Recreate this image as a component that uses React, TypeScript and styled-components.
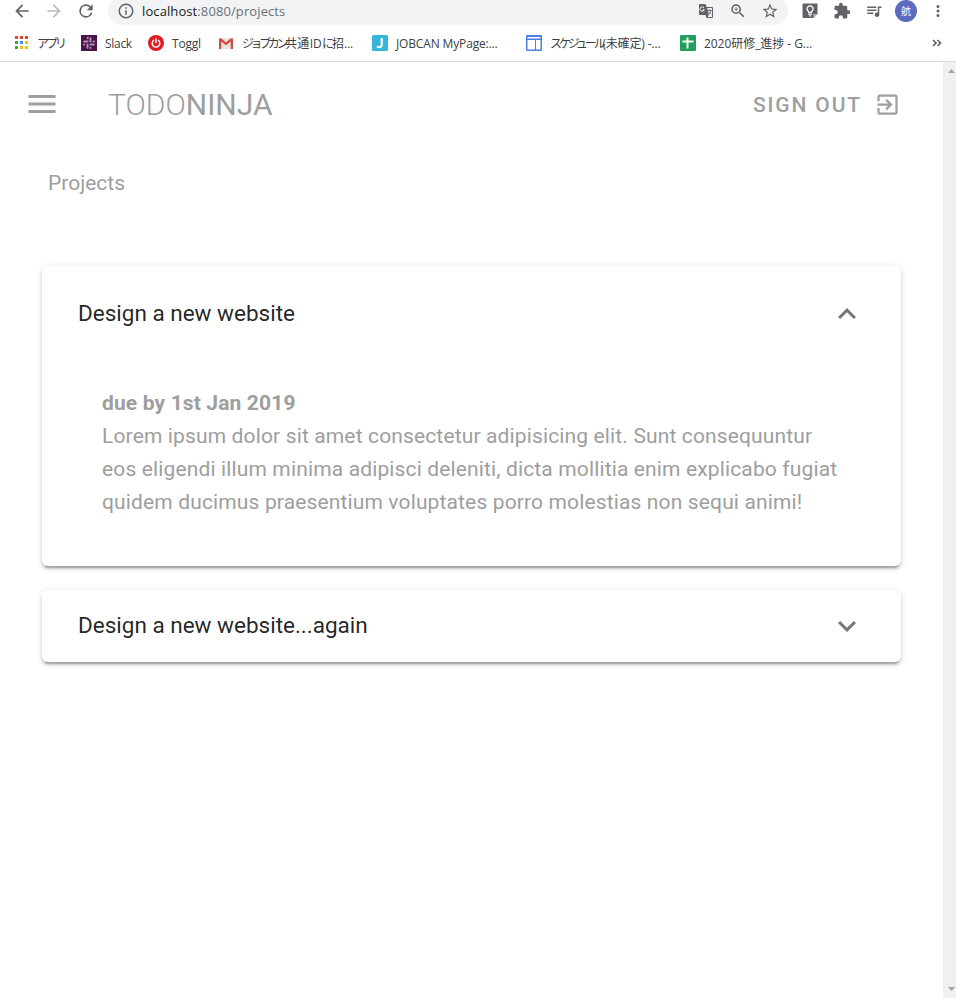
import React, { useState } from "react";
import styled, { createGlobalStyle, css } from "styled-components";

const GlobalStyle = createGlobalStyle`
  *, *::before, *::after { box-sizing: border-box; }
  html, body, #root { height: 100%; margin: 0; overflow: hidden; background: #fff; }
  button { border: 0; padding: 0; background: none; font: inherit; color: inherit; cursor: pointer; }
`;

const Window = styled.div`
  display: flex;
  flex-direction: column;
  width: 956px;
  height: 998px;
  overflow: hidden;
  background: #fff;
`;

const Icon = styled.svg<{ $size: number }>`
  display: block;
  flex: none;
  width: ${(p) => p.$size}px;
  height: ${(p) => p.$size}px;
  fill: currentColor;
`;

/* Browser chrome */

const AddressRow = styled.div`
  display: flex;
  align-items: center;
  flex: none;
  height: 25px;
  padding: 0 8px 3px 12px;
  color: #5f6368;
`;

const NavButton = styled.button<{ $dim?: boolean }>`
  margin-right: 12px;
  color: ${(p) => (p.$dim ? "#babcbe" : "#5f6368")};
`;

const Omnibox = styled.div`
  display: flex;
  align-items: center;
  width: 680px;
  height: 28px;
  margin: -3px 13px -3px 0;
  padding: 0 9px;
  border-radius: 14px;
  background: #f1f3f4;
`;

const Address = styled.div`
  flex: 1;
  margin-left: 7px;
  font: 13px/18px "Open Sans", "Noto Sans", sans-serif;
  letter-spacing: 0.1px;
  white-space: nowrap;
  color: #6c7074;
`;

const Host = styled.span`
  color: #202124;
`;

const OmniboxActions = styled.div`
  display: flex;
  gap: 14px;
`;

const Extensions = styled.div`
  display: flex;
  align-items: center;
  gap: 14px;
`;

const Avatar = styled.div`
  display: flex;
  align-items: center;
  justify-content: center;
  width: 22px;
  height: 22px;
  margin: 0 -2px;
  border-radius: 50%;
  background: #5c6bc0;
  color: #fff;
  font: 10px/22px "Noto Sans CJK JP", sans-serif;
`;

const BookmarkBar = styled.div`
  display: flex;
  align-items: center;
  flex: none;
  height: 37px;
  padding: 0 11px 0 13px;
  border-bottom: 1px solid #dadce0;
  color: #3c4043;
`;

const Bookmark = styled.div<{ $width: number }>`
  display: flex;
  align-items: center;
  gap: 8px;
  flex: none;
  width: ${(p) => p.$width}px;
`;

const BookmarkLabel = styled.span`
  padding-top: 2px;
  font: 12px/18px "Open Sans", "Noto Sans CJK JP", sans-serif;
  white-space: pre;
`;

const Run = styled.span<{ $spacing: number }>`
  letter-spacing: ${(p) => p.$spacing}px;
`;

const Overflow = styled.div`
  margin-left: auto;
  color: #5f6368;
`;

/* Page */

const Viewport = styled.div`
  display: flex;
  flex: 1;
  min-height: 0;
`;

const Page = styled.main`
  flex: 1;
  font-family: Roboto, sans-serif;
  color: #9e9e9e;
`;

const Toolbar = styled.header`
  display: flex;
  align-items: center;
  height: 84px;
  padding: 0 42px 0 24px;
`;

const Brand = styled.div`
  flex: 1;
  margin-left: 48px;
  font-size: 30px;
  line-height: 45px;
`;

const Thin = styled.span`
  font-weight: 300;
`;

const SignOut = styled.button`
  display: flex;
  align-items: center;
  gap: 12px;
  font-size: 21px;
  font-weight: 500;
  letter-spacing: 1.875px;
`;

const SignOutLabel = styled.span`
  padding-top: 2px;
`;

const Heading = styled.h1`
  margin: 0;
  padding: 0 48px;
  height: 72px;
  font-size: 21px;
  font-weight: 400;
  line-height: 74px;
`;

const Panels = styled.div`
  display: flex;
  flex-direction: column;
  gap: 24px;
  padding: 48px 42px;
`;

const Panel = styled.section`
  border-radius: 6px;
  background: #fff;
  box-shadow: 0 4.5px 1.5px -3px rgba(0, 0, 0, 0.2), 0 3px 3px 0 rgba(0, 0, 0, 0.14),
    0 1.5px 7.5px 0 rgba(0, 0, 0, 0.12);
`;

const PanelHeader = styled.button<{ $open: boolean }>`
  display: flex;
  align-items: center;
  justify-content: space-between;
  width: 100%;
  height: ${(p) => (p.$open ? 96 : 72)}px;
  padding: 0 36px;
  font-size: 22.5px;
  line-height: 22.5px;
  color: rgba(0, 0, 0, 0.87);
`;

const PanelTitle = styled.span`
  padding-bottom: 2px;
`;

const Chevron = styled(Icon)<{ $open: boolean }>`
  color: rgba(0, 0, 0, 0.54);
  ${(p) =>
    p.$open &&
    css`
      transform: rotate(180deg);
    `}
`;

const PanelBody = styled.div`
  padding: 25px 60px 47px;
  font-size: 21px;
  line-height: 33px;
  letter-spacing: 0.14px;
`;

const Due = styled.div`
  font-weight: 700;
`;

const Scrollbar = styled.div`
  display: flex;
  flex-direction: column;
  justify-content: space-between;
  align-items: flex-end;
  width: 13px;
  padding: 7px 1px 7px 0;
  background: #f0f0f0;
`;

const ScrollArrow = styled.svg`
  display: block;
  width: 7px;
  height: 4px;
  fill: #a3a3a3;
`;

const paths = {
  back: "M20 11H7.83l5.59-5.59L12 4l-8 8 8 8 1.41-1.41L7.83 13H20v-2z",
  forward: "M12 4l-1.41 1.41L16.17 11H4v2h12.17l-5.58 5.59L12 20l8-8z",
  reload:
    "M17.65 6.35A7.96 7.96 0 0 0 12 4a8 8 0 1 0 7.73 10h-2.08A6 6 0 1 1 12 6c1.66 0 3.14.69 4.22 1.78L13 11h7V4l-2.35 2.35z",
  info: "M11 7h2v2h-2zm0 4h2v6h-2zm1-9a10 10 0 1 0 0 20 10 10 0 0 0 0-20zm0 18a8 8 0 1 1 0-16 8 8 0 0 1 0 16z",
  zoom: "M15.5 14h-.79l-.28-.27A6.471 6.471 0 0 0 16 9.5 6.5 6.5 0 1 0 9.5 16c1.61 0 3.09-.59 4.23-1.57l.27.28v.79l5 4.99L20.49 19l-4.99-5zm-6 0C7.01 14 5 11.99 5 9.5S7.01 5 9.5 5 14 7.01 14 9.5 11.99 14 9.5 14zM12 10h-2v2H9v-2H7V9h2V7h1v2h2v1z",
  star: "M22 9.24l-7.19-.62L12 2 9.19 8.63 2 9.24l5.46 4.73L5.82 21 12 17.27 18.18 21l-1.63-7.03L22 9.24zM12 15.4l-3.76 2.27 1-4.28-3.32-2.88 4.38-.38L12 6.1l1.71 4.04 4.38.38-3.32 2.88 1 4.28L12 15.4z",
  puzzle:
    "M20.5 11H19V7c0-1.1-.9-2-2-2h-4V3.5a2.5 2.5 0 0 0-5 0V5H4c-1.1 0-1.99.9-1.99 2v3.8H3.5c1.49 0 2.7 1.21 2.7 2.7s-1.21 2.7-2.7 2.7H2V20c0 1.1.9 2 2 2h3.8v-1.5c0-1.49 1.21-2.7 2.7-2.7s2.7 1.21 2.7 2.7V22H17c1.1 0 2-.9 2-2v-4h1.5a2.5 2.5 0 0 0 0-5z",
  queue:
    "M15 6H3v2h12V6zm0 4H3v2h12v-2zM3 16h8v-2H3v2zM17 6v8.18c-.31-.11-.65-.18-1-.18-1.66 0-3 1.34-3 3s1.34 3 3 3 3-1.34 3-3V8h3V6h-5z",
  more: "M12 8a2 2 0 1 0 0-4 2 2 0 0 0 0 4zm0 2a2 2 0 1 0 0 4 2 2 0 0 0 0-4zm0 6a2 2 0 1 0 0 4 2 2 0 0 0 0-4z",
  menu: "M3 18h18v-2H3v2zm0-5h18v-2H3v2zm0-7v2h18V6H3z",
  exit: "M10.09 15.59L11.5 17l5-5-5-5-1.41 1.41L12.67 11H3v2h9.67l-2.58 2.59zM19 3H5a2 2 0 0 0-2 2v4h2V5h14v14H5v-4H3v4a2 2 0 0 0 2 2h14c1.1 0 2-.9 2-2V5c0-1.1-.9-2-2-2z",
  chevron: "M7.41 8.59L12 13.17l4.59-4.58L18 10l-6 6-6-6 1.41-1.41z",
};

const Glyph = ({ name, size = 18 }: { name: keyof typeof paths; size?: number }) => (
  <Icon $size={size} viewBox="0 0 24 24">
    <path d={paths[name]} />
  </Icon>
);

const TranslateIcon = () => (
  <Icon $size={18} viewBox="0 0 18 18">
    <path d="M3 2h5.500l1.200 3H15a1 1 0 0 1 1 1v9a1 1 0 0 1-1 1H9.500l-1.100-3H3a1 1 0 0 1-1-1V3a1 1 0 0 1 1-1z" />
    <path d="M10.200 6H15v9h-4.300l1-1.800z" fill="#f1f3f4" />
    <path d="M10.200 8.300h4.600M12.300 7.300v1M14 8.500c-.4 1.600-1.200 2.800-2.500 3.700M11.200 9.500l3 3" fill="none" stroke="#5f6368" strokeWidth="0.900" />
    <path d="M7 5.800A2.200 2.200 0 1 0 7.300 7.800H5.300" fill="none" stroke="#f1f3f4" />
  </Icon>
);

const BulbIcon = () => (
  <Icon $size={18} viewBox="0 0 18 18">
    <path d="M2.500 1.500h14v10.500l-4 4h-10a1 1 0 0 1-1-1v-12.500a1 1 0 0 1 1-1z" />
    <path d="M16.500 12l-4 4v-4z" fill="#b6b8ba" />
    <path d="M7.700 10.700V9.500a3 3 0 1 1 2.800 0v1.200z" fill="none" stroke="#fff" strokeWidth="1.300" />
    <path d="M7.200 12.300h3.800M8 13.900h2.200" stroke="#fff" strokeWidth="1" />
  </Icon>
);

const appColors = ["#ea4335", "#ea4335", "#ea4335", "#34a853", "#4285f4", "#fbbc05", "#34a853", "#fbbc05", "#fbbc05"];

const AppsIcon = () => (
  <Icon $size={16} viewBox="0 0 16 16">
    {appColors.map((fill, i) => (
      <rect key={i} x={2 + (i % 3) * 5} y={1 + Math.floor(i / 3) * 5} width="3" height="3" fill={fill} />
    ))}
  </Icon>
);

const SlackIcon = () => (
  <Icon $size={16} viewBox="0 0 16 16">
    <rect width="16" height="16" fill="#4a154b" />
    <path
      d="M6.700 2.800v.4M3.200 6.500h3.500M9.500 3.200v3.300M12.700 6.500h.3M12.800 9.500H9.500M9.500 12.800v.3M6.500 12.800V9.500M3.200 9.500H3"
      fill="none"
      stroke="#b08fb1"
      strokeWidth="2"
      strokeLinecap="round"
    />
  </Icon>
);

const TogglIcon = () => (
  <Icon $size={16} viewBox="0 0 16 16">
    <circle cx="8" cy="8" r="8" fill="#e01b22" />
    <path d="M6 5.100a3.800 3.800 0 1 0 4 0M8 3.300v5" fill="none" stroke="#fff" strokeWidth="1.400" />
  </Icon>
);

const GmailIcon = () => (
  <Icon $size={16} viewBox="0 0 16 16">
    <rect x="1" y="3" width="14" height="11" rx="0.800" fill="#e7e4e2" />
    <path d="M1 3.500h2.500L8 7.500l4.500-4h2.500V14h-2.300V6.500L8 10.200 3.300 6.500V14H1z" fill="#d54b3d" />
  </Icon>
);

const JobcanIcon = () => (
  <Icon $size={16} viewBox="0 0 16 16">
    <rect width="16" height="16" rx="1.500" fill="#35b5d9" />
    <path d="M9.700 3v6.500c0 2-1.200 2.600-2.300 2.600-.9 0-1.700-.3-2.300-.9" fill="none" stroke="#fff" strokeWidth="2.200" />
  </Icon>
);

const CalendarIcon = () => (
  <Icon $size={16} viewBox="0 0 16 16">
    <rect width="16" height="16" rx="1" fill="#4a7fe5" />
    <path d="M1.500 2H14.500V3.500H1.500zM1.500 5H9V14.500H1.500zM10 5h4.500v9.500H10z" fill="#fff" />
  </Icon>
);

const SheetIcon = () => (
  <Icon $size={16} viewBox="0 0 16 16">
    <rect width="16" height="16" rx="1" fill="#22a05b" />
    <path d="M2.500 6.500h11M7.500 2.500v11" stroke="#fff" strokeWidth="1.900" />
  </Icon>
);

type LabelRun = [text: string, spacing: number];

/* Kana is set tighter than kanji and Latin text, so labels are split into runs. */
const bookmarks: { icon: React.ReactNode; runs: LabelRun[]; width: number }[] = [
  { icon: <AppsIcon />, runs: [["アプリ", -3]], width: 68 },
  { icon: <SlackIcon />, runs: [["Slack", -0.3]], width: 67 },
  { icon: <TogglIcon />, runs: [["Toggl", -0.2]], width: 70 },
  {
    icon: <GmailIcon />,
    runs: [["ジョブカン", -3.4], ["共通", 0.3], ["ID", 0.1], ["に", -2], ["招", 0], ["...", -0.1]],
    width: 154,
  },
  { icon: <JobcanIcon />, runs: [["JOBCAN MyPage:...", -0.15]], width: 154 },
  {
    icon: <CalendarIcon />,
    runs: [["スケジュール", -3.1], ["(", -0.3], ["未確定", -0.2], [") -...", -0.1]],
    width: 154,
  },
  { icon: <SheetIcon />, runs: [["2020研修_進捗 - G...", -0.05]], width: 150 },
];

const projects = [
  {
    title: "Design a new website",
    due: "1st Jan 2019",
    content:
      "Lorem ipsum dolor sit amet consectetur adipisicing elit. Sunt consequuntur eos eligendi illum minima adipisci deleniti, dicta mollitia enim explicabo fugiat quidem ducimus praesentium voluptates porro molestias non sequi animi!",
  },
  {
    title: "Design a new website...again",
    due: "20th Dec 2018",
    content: "Lorem ipsum dolor sit amet consectetur adipisicing elit.",
  },
];

export default function App() {
  const [openIndex, setOpenIndex] = useState(0);

  return (
    <>
      <GlobalStyle />
      <Window>
        <AddressRow>
          <NavButton aria-label="Back"><Glyph name="back" size={20} /></NavButton>
          <NavButton aria-label="Forward" $dim><Glyph name="forward" size={20} /></NavButton>
          <NavButton aria-label="Reload"><Glyph name="reload" size={20} /></NavButton>
          <Omnibox>
            <Glyph name="info" size={18} />
            <Address><Host>localhost</Host>:8080/projects</Address>
            <OmniboxActions>
              <TranslateIcon />
              <Glyph name="zoom" />
              <Glyph name="star" />
            </OmniboxActions>
          </Omnibox>
          <Extensions>
            <BulbIcon />
            <Glyph name="puzzle" />
            <Glyph name="queue" />
            <Avatar>航</Avatar>
            <Glyph name="more" />
          </Extensions>
        </AddressRow>
        <BookmarkBar>
          {bookmarks.map((b) => (
            <Bookmark key={b.runs[0][0]} $width={b.width}>
              {b.icon}
              <BookmarkLabel>
                {b.runs.map(([text, spacing]) => (
                  <Run key={text} $spacing={spacing}>{text}</Run>
                ))}
              </BookmarkLabel>
            </Bookmark>
          ))}
          <Overflow>
            <Icon $size={16} viewBox="0 0 16 16">
              <path d="M4 5l3 3-3 3M8.500 5l3 3-3 3" fill="none" stroke="currentColor" strokeWidth="1.700" />
            </Icon>
          </Overflow>
        </BookmarkBar>
        <Viewport>
          <Page>
            <Toolbar>
              <button aria-label="Menu"><Glyph name="menu" size={36} /></button>
              <Brand><Thin>TODO</Thin><span>NINJA</span></Brand>
              <SignOut>
                <SignOutLabel>SIGN OUT</SignOutLabel>
                <Glyph name="exit" size={27} />
              </SignOut>
            </Toolbar>
            <Heading>Projects</Heading>
            <Panels>
              {projects.map((project, i) => (
                <Panel key={project.title}>
                  <PanelHeader $open={openIndex === i} onClick={() => setOpenIndex(openIndex === i ? -1 : i)}>
                    <PanelTitle>{project.title}</PanelTitle>
                    <Chevron $size={36} $open={openIndex === i} viewBox="0 0 24 24">
                      <path d={paths.chevron} />
                    </Chevron>
                  </PanelHeader>
                  {openIndex === i && (
                    <PanelBody>
                      <Due>due by {project.due}</Due>
                      {project.content}
                    </PanelBody>
                  )}
                </Panel>
              ))}
            </Panels>
          </Page>
          <Scrollbar>
            <ScrollArrow viewBox="0 0 7 4"><path d="M0 4h7L3.500 0z" /></ScrollArrow>
            <ScrollArrow viewBox="0 0 7 4"><path d="M0 0h7L3.500 4z" /></ScrollArrow>
          </Scrollbar>
        </Viewport>
      </Window>
    </>
  );
}
